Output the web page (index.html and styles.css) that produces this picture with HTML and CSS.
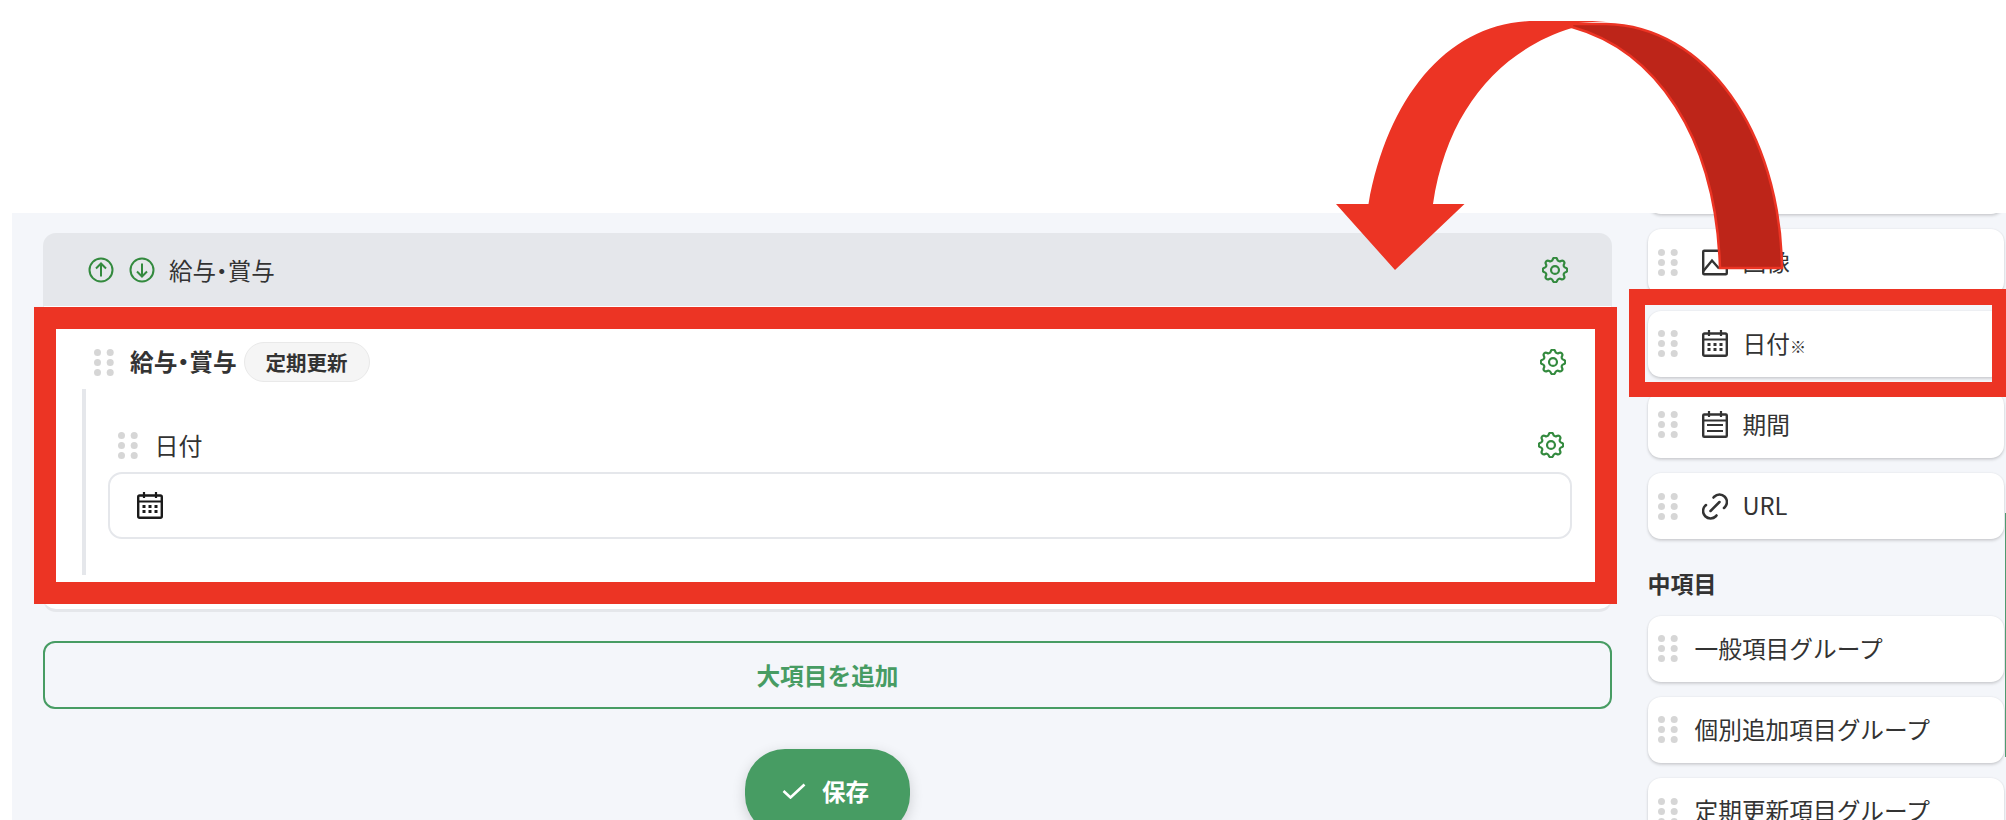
FILE: index.html
```html
<!DOCTYPE html>
<html lang="ja">
<head>
<meta charset="utf-8">
<title>項目設定</title>
<link rel="stylesheet" href="styles.css">
</head>
<body>
<svg width="0" height="0" class="defs">
  <defs>
    <symbol id="gear" viewBox="2.5 2.5 19 19"><path d="M10.325 4.317c.426-1.756 2.924-1.756 3.35 0a1.724 1.724 0 0 0 2.573 1.066c1.543-.94 3.31.826 2.37 2.37a1.724 1.724 0 0 0 1.065 2.572c1.756.426 1.756 2.924 0 3.35a1.724 1.724 0 0 0-1.066 2.573c.94 1.543-.826 3.31-2.37 2.37a1.724 1.724 0 0 0-2.572 1.065c-.426 1.756-2.924 1.756-3.35 0a1.724 1.724 0 0 0-2.573-1.066c-1.543.94-3.31-.826-2.37-2.37a1.724 1.724 0 0 0-1.065-2.572c-1.756-.426-1.756-2.924 0-3.35a1.724 1.724 0 0 0 1.066-2.573c-.94-1.543.826-3.31 2.37-2.37 1 .608 2.296.07 2.572-1.065z" fill="none" stroke="currentColor" stroke-width="1.6"/><circle cx="12" cy="12" r="2.9" fill="none" stroke="currentColor" stroke-width="1.6"/></symbol>
    <symbol id="calendar" viewBox="0 0 26 27"><rect x="1.200" y="3.500" width="23.600" height="22.300" rx="1.500" fill="none" stroke="currentColor" stroke-width="2.400"/><path d="M1 9.500h24M7 0v6M19 0v6" fill="none" stroke="currentColor" stroke-width="2.200"/><path d="M5.500 13h3v3h-3zM11.500 13h3v3h-3zM17.500 13h3v3h-3zM5.500 18h3v3h-3zM11.500 18h3v3h-3zM17.500 18h3v3h-3z" fill="currentColor"/></symbol>
    <symbol id="period" viewBox="0 0 26 27"><rect x="1.200" y="3.500" width="23.600" height="22.300" rx="1" fill="none" stroke="currentColor" stroke-width="2.400"/><path d="M1 9.500h24M7 0v6M19 0v6M5 14h16M5 20h16" fill="none" stroke="currentColor" stroke-width="2.200"/></symbol>
    <symbol id="link" viewBox="3.300 3.300 17.400 17.400"><path d="M9 15l6-6M11 6l.463-.536a5 5 0 0 1 7.071 7.072l-.534.464M13 18l-.397.534a5.068 5.068 0 0 1-7.127 0 4.972 4.972 0 0 1 0-7.071l.524-.463" fill="none" stroke="currentColor" stroke-width="1.700" stroke-linecap="round"/></symbol>
    <symbol id="picture" viewBox="0 0 26 26"><rect x="1.200" y="1.200" width="23.600" height="23.600" rx="1" fill="none" stroke="currentColor" stroke-width="2.400"/><path d="M1 22l9-11 7 8" fill="none" stroke="currentColor" stroke-width="2.400"/></symbol>
    <symbol id="dots" viewBox="0 0 20 27"><g fill="#d6d6d6"><circle cx="3.500" cy="3.500" r="3.500"/><circle cx="16.200" cy="3.500" r="3.500"/><circle cx="3.500" cy="13.500" r="3.500"/><circle cx="16.200" cy="13.500" r="3.500"/><circle cx="3.500" cy="23.500" r="3.500"/><circle cx="16.200" cy="23.500" r="3.500"/></g></symbol>
  </defs>
</svg>

<main class="panel">
  <section class="main-col">
    <header class="section-head">
      <svg class="round-btn" viewBox="0 0 26 26"><circle cx="13" cy="13" r="11.500" fill="none" stroke="currentColor" stroke-width="2"/><path d="M13 19.500V7M8 11.500L13 6.500l5 5" fill="none" stroke="currentColor" stroke-width="2"/></svg>
      <svg class="round-btn" viewBox="0 0 26 26"><circle cx="13" cy="13" r="11.500" fill="none" stroke="currentColor" stroke-width="2"/><path d="M13 6.500V19M8 14.500l5 5 5-5" fill="none" stroke="currentColor" stroke-width="2"/></svg>
      <span class="section-name">給与・賞与</span>
      <svg class="gear"><use href="#gear"/></svg>
    </header>
    <div class="section-body">
      <div class="group-row">
        <svg class="dots"><use href="#dots"/></svg>
        <strong class="group-name">給与・賞与</strong>
        <span class="badge">定期更新</span>
        <svg class="gear"><use href="#gear"/></svg>
      </div>
      <div class="nested">
        <div class="field-row">
          <svg class="dots"><use href="#dots"/></svg>
          <span class="field-name">日付</span>
          <svg class="gear"><use href="#gear"/></svg>
        </div>
        <div class="date-input">
          <svg class="input-icon"><use href="#calendar"/></svg>
        </div>
      </div>
    </div>
    <button class="add-btn" type="button">大項目を追加</button>
    <button class="save-btn" type="button">
      <svg class="check" viewBox="0 0 24 16"><path d="M1.500 8l7 6.500L22.500 1.500" fill="none" stroke="currentColor" stroke-width="2.600"/></svg>
      <span>保存</span>
    </button>
  </section>

  <aside class="side-col">
    <div class="card card-clipped"></div>
    <div class="card"><svg class="dots"><use href="#dots"/></svg><svg class="card-icon"><use href="#picture"/></svg><span>画像</span></div>
    <div class="card"><svg class="dots"><use href="#dots"/></svg><svg class="card-icon"><use href="#calendar"/></svg><span>日付<small class="note">※</small></span></div>
    <div class="card"><svg class="dots"><use href="#dots"/></svg><svg class="card-icon"><use href="#period"/></svg><span>期間</span></div>
    <div class="card"><svg class="dots"><use href="#dots"/></svg><svg class="card-icon"><use href="#link"/></svg><span>URL</span></div>
    <h2 class="side-title">中項目</h2>
    <div class="card"><svg class="dots"><use href="#dots"/></svg><span>一般項目グループ</span></div>
    <div class="card"><svg class="dots"><use href="#dots"/></svg><span>個別追加項目グループ</span></div>
    <div class="card"><svg class="dots"><use href="#dots"/></svg><span>定期更新項目グループ</span></div>
  </aside>
  <div class="scroll-thumb"></div>
</main>

<div class="callout callout-main"></div>
<div class="callout callout-side"></div>
<svg class="arrow" viewBox="0 0 2006 820">
  <path class="arrow-dark" d="M1572 24H1606C1705 26 1780 130 1782 268H1720C1716 135 1655 50 1572 27Z"/>
  <path class="arrow-light" d="M1336 204H1368.500C1388 95 1450 21 1535 21H1606L1572 23.500V28C1500 50 1447 110 1433 204H1464.500L1395 270Z"/>
</svg>
</body>
</html>
```
FILE: styles.css
```css
* { box-sizing: border-box; }
html, body { margin: 0; padding: 0; }
body {
  position: relative;
  width: 2006px;
  height: 820px;
  padding-top: 213px;
  overflow: hidden;
  background: #fff;
  color: #333;
  font-family: "Noto Sans CJK JP", "Noto Sans", sans-serif;
  font-size: 24px;
}
.defs { position: absolute; }

.panel {
  position: relative;
  display: flex;
  gap: 35.500px;
  height: 607px;
  margin-left: 12px;
  padding-left: 31px;
  overflow: hidden;
  background: #f4f6fa;
}

.main-col {
  display: flex;
  flex-direction: column;
  flex: none;
  width: 1569px;
  padding-top: 20px;
}
.section-head {
  display: flex;
  align-items: center;
  flex: none;
  gap: 15px;
  height: 73px;
  padding: 2px 44px 0 45px;
  border-radius: 13px 13px 0 0;
  background: #e5e7eb;
}
.round-btn { flex: none; width: 26px; height: 26px; margin-top: -2px; color: #338a3e; }
.section-name { margin-left: -1px; font-feature-settings: "palt"; font-size: 23.500px; line-height: 1; }
.section-head .gear { margin-top: -2px; }
.gear { flex: none; width: 26px; height: 26px; margin-left: auto; color: #338a3e; }

.section-body {
  flex: none;
  height: 306px;
  padding: 36px 45px 0 49.500px;
  border: 1px solid #eceef1;
  border-top: 0;
  border-bottom: 3px solid #e5e7eb;
  border-radius: 0 0 13px 13px;
  background: #fff;
}
.dots { flex: none; width: 20px; height: 27px; }
.group-row { display: flex; align-items: center; height: 40px; }
.group-name { margin-left: 16.500px; font-feature-settings: "palt"; font-size: 23.700px; font-weight: 700; line-height: 1; }
.badge {
  display: flex;
  align-items: center;
  height: 40px;
  margin-left: 7px;
  padding: 0 21px;
  border: 1px solid #e9e9e9;
  border-radius: 20px;
  background: #f5f5f5;
  font-size: 20.500px;
  font-weight: 700;
}
.nested {
  height: 186px;
  margin: 7px -6px 0 -11.500px;
  padding: 39px 0 0 22px;
  border-left: 4px solid #e5e7eb;
}
.field-row { display: flex; align-items: center; height: 34px; padding: 0 8px 0 9.500px; }
.field-name { margin-left: 17px; font-size: 24px; line-height: 1; }
.date-input {
  display: flex;
  align-items: center;
  height: 67px;
  margin-top: 10px;
  padding-left: 27px;
  border: 2px solid #e5e7eb;
  border-radius: 14px;
  background: #fff;
}
.input-icon { width: 26px; height: 27px; color: #1a1a1a; }

.add-btn {
  flex: none;
  height: 68px;
  margin-top: 29px;
  border: 2px solid #479c63;
  border-radius: 12px;
  background: transparent;
  color: #479c63;
  font: 700 23.700px "Noto Sans CJK JP", sans-serif;
}
.save-btn {
  display: flex;
  align-items: center;
  justify-content: center;
  flex: none;
  gap: 16px;
  align-self: center;
  width: 165px;
  height: 86px;
  margin-top: 40px;
  padding: 0 4px 3px 0;
  border: 0;
  border-radius: 40px;
  background: #479c63;
  box-shadow: 0 4px 14px rgba(0, 0, 0, .16);
  color: #fff;
  font: 700 23.500px "Noto Sans CJK JP", sans-serif;
}
.check { width: 24px; height: 16px; }

.side-col {
  display: flex;
  flex-direction: column;
  flex: none;
  gap: 15.250px;
  width: 356.500px;
}
.card {
  display: flex;
  align-items: center;
  flex: none;
  height: 66px;
  padding-left: 10px;
  border-radius: 13px;
  background: #fff;
  box-shadow: 0 2px 3px rgba(0, 0, 0, .14), 0 0 2px rgba(0, 0, 0, .09);
  font-size: 23.700px;
  line-height: 1;
}
.card-clipped { margin-top: -65px; }
.card .dots { margin-right: 17px; }
.card-icon { flex: none; width: 26px; height: 27px; margin: 0 15px 0 7px; color: #333; }
.note { font-size: 16px; }
.side-title { flex: none; height: 32px; margin: 13px 0 1px; font-size: 23px; font-weight: 700; line-height: 32px; }

.scroll-thumb {
  position: absolute;
  top: 300px;
  right: 0;
  width: 1.500px;
  height: 244px;
  background: #4f9a70;
}

.callout { position: absolute; border-style: solid; border-color: #ec3424; }
.callout-main { top: 307px; left: 34px; width: 1583px; height: 297px; border-width: 22px; }
.callout-side { top: 289px; left: 1629px; right: 0; height: 108px; border-width: 16px 14px 15px 16px; }

.arrow { position: absolute; top: 0; left: 0; width: 2006px; height: 820px; pointer-events: none; }
.arrow-light { fill: #ec3424; }
.arrow-dark { fill: #bd2519; stroke: #ec3424; stroke-width: 2.500px; }
```
